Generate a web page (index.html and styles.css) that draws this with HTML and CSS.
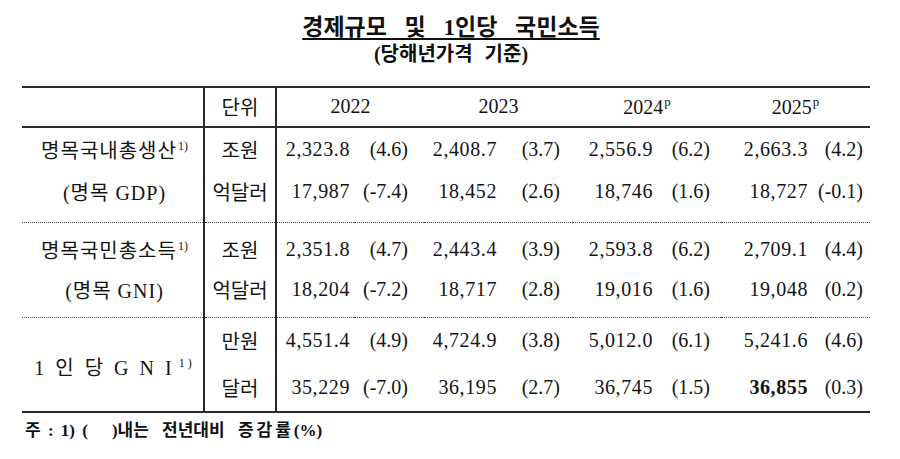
FILE: index.html
```html
<!DOCTYPE html>
<html lang="ko">
<head>
<meta charset="utf-8">
<title>경제규모 및 1인당 국민소득</title>
<link rel="stylesheet" href="styles.css">
</head>
<body>
<div class="page">
  <div class="heading">
    <div class="title">경제규모 및 1인당 국민소득</div>
    <div class="subtitle">(당해년가격 기준)</div>
  </div>
  <table class="stats">
    <colgroup>
      <col class="c-label"><col class="c-unit">
      <col class="c-a1"><col class="c-b1">
      <col class="c-a2"><col class="c-b2">
      <col class="c-a3"><col class="c-b3">
      <col class="c-a4"><col class="c-b4">
    </colgroup>
    <thead>
      <tr class="head">
        <th class="label"></th>
        <th class="unit">단위</th>
        <th class="year" colspan="2">2022</th>
        <th class="year" colspan="2">2023</th>
        <th class="year" colspan="2">2024<span class="supp">p</span></th>
        <th class="year" colspan="2">2025<span class="supp">p</span></th>
      </tr>
    </thead>
    <tbody>
      <tr class="r-top g1">
        <td class="label">명목국내총생산<span class="sup">1)</span></td>
        <td class="unit">조원</td>
        <td class="a a1">2,323.8</td><td class="b b1">(4.6)</td>
        <td class="a a2">2,408.7</td><td class="b b2">(3.7)</td>
        <td class="a a3">2,556.9</td><td class="b b3">(6.2)</td>
        <td class="a a4">2,663.3</td><td class="b b4">(4.2)</td>
      </tr>
      <tr class="r-bot g1">
        <td class="label">(명목 GDP)</td>
        <td class="unit">억달러</td>
        <td class="a a1">17,987</td><td class="b b1">(-7.4)</td>
        <td class="a a2">18,452</td><td class="b b2">(2.6)</td>
        <td class="a a3">18,746</td><td class="b b3">(1.6)</td>
        <td class="a a4">18,727</td><td class="b b4">(-0.1)</td>
      </tr>
      <tr class="r-top g2">
        <td class="label">명목국민총소득<span class="sup">1)</span></td>
        <td class="unit">조원</td>
        <td class="a a1">2,351.8</td><td class="b b1">(4.7)</td>
        <td class="a a2">2,443.4</td><td class="b b2">(3.9)</td>
        <td class="a a3">2,593.8</td><td class="b b3">(6.2)</td>
        <td class="a a4">2,709.1</td><td class="b b4">(4.4)</td>
      </tr>
      <tr class="r-bot g2">
        <td class="label">(명목 GNI)</td>
        <td class="unit">억달러</td>
        <td class="a a1">18,204</td><td class="b b1">(-7.2)</td>
        <td class="a a2">18,717</td><td class="b b2">(2.8)</td>
        <td class="a a3">19,016</td><td class="b b3">(1.6)</td>
        <td class="a a4">19,048</td><td class="b b4">(0.2)</td>
      </tr>
      <tr class="r-top g3">
        <td class="label spaced" rowspan="2">1 인 당 G N I<span class="sup sup-wide">1)</span></td>
        <td class="unit">만원</td>
        <td class="a a1">4,551.4</td><td class="b b1">(4.9)</td>
        <td class="a a2">4,724.9</td><td class="b b2">(3.8)</td>
        <td class="a a3">5,012.0</td><td class="b b3">(6.1)</td>
        <td class="a a4">5,241.6</td><td class="b b4">(4.6)</td>
      </tr>
      <tr class="r-bot g3 last">
        <td class="unit">달러</td>
        <td class="a a1">35,229</td><td class="b b1">(-7.0)</td>
        <td class="a a2">36,195</td><td class="b b2">(2.7)</td>
        <td class="a a3">36,745</td><td class="b b3">(1.5)</td>
        <td class="a a4 strong">36,855</td><td class="b b4">(0.3)</td>
      </tr>
    </tbody>
  </table>
  <div class="note"><span class="tight">주 : 1) (</span><span class="blank"></span>)내는 전년대비 <span class="wide">증감률</span>(%)</div>
</div>
</body>
</html>
```
FILE: styles.css
```css
html, body {
  margin: 0;
  padding: 0;
  background: #ffffff;
}

.page {
  width: 900px;
  height: 459px;
  font-family: "Liberation Serif", "Noto Sans CJK KR", serif;
  color: #141414;
}

.heading {
  padding-top: 14px;
  text-align: center;
  font-family: "Liberation Serif", "Noto Sans CJK KR", serif;
  font-weight: 700;
  color: #111;
}

.title {
  font-size: 23px;
  line-height: 27px;
  word-spacing: 12px;
  text-decoration: underline;
  text-decoration-thickness: 2px;
  text-underline-offset: 3px;
  padding-left: 2px;
}

.subtitle {
  font-size: 20px;
  line-height: 26px;
  word-spacing: 7px;
  padding-left: 2px;
}

.stats {
  margin: 19px 0 0 22px;
  width: 848px;
  border-collapse: collapse;
  table-layout: fixed;
  font-size: 20px;
}

.c-label { width: 182px; }
.c-unit { width: 72px; }
.c-a1 { width: 78px; }
.c-b1 { width: 70px; }
.c-a2 { width: 76px; }
.c-b2 { width: 73px; }
.c-a3 { width: 83px; }
.c-b3 { width: 65px; }
.c-a4 { width: 90px; }
.c-b4 { width: 59px; }

.stats th,
.stats td {
  padding: 0;
  white-space: nowrap;
  font-weight: 400;
  vertical-align: middle;
}

.stats .head {
  height: 40px;
  border-top: 2px solid #2a2a2a;
  border-bottom: 2px solid #2a2a2a;
}

.stats .head th {
  padding-bottom: 2px;
}

.stats .year {
  text-align: center;
}

.stats .label {
  text-align: center;
  border-right: 2px solid #2a2a2a;
  font-size: 20px;
  letter-spacing: 1px;
  padding-left: 4px;
}

.stats .unit {
  text-align: center;
  border-right: 2px solid #2a2a2a;
  font-size: 20px;
}

.stats .r-top {
  height: 47px;
}

.stats .r-bot {
  height: 48px;
  border-bottom: 1px dotted #444;
}

.stats .r-bot.last {
  border-bottom: 2px solid #2a2a2a;
}

/* vertical tuning per group */
.stats .g1.r-top td { padding-bottom: 4px; }
.stats .g1.r-bot td { padding-bottom: 12px; }
.stats .g2.r-top td { padding-top: 8px; }
.stats .g2.r-bot td { padding-bottom: 6px; }
.stats .g3.r-top td { padding-top: 1px; padding-bottom: 1px; }
.stats .g3.r-bot td { padding-bottom: 0; }

.stats .r-top td.spaced {
  letter-spacing: 3px;
  padding: 4px 0 0 4px;
}

.stats .a,
.stats .b {
  text-align: right;
}

.stats .a {
  letter-spacing: 0.6px;
}

.stats .a1 { padding-right: 4px; }
.stats .a2 { padding-right: 3px; }
.stats .a3 { padding-right: 3px; }
.stats .a4 { padding-right: 3px; }
.stats .b1 { padding-right: 16px; }
.stats .b2 { padding-right: 13px; }
.stats .b3 { padding-right: 11px; }
.stats .b4 { padding-right: 7px; }

.stats .strong {
  font-weight: 700;
}

.sup {
  font-size: 12px;
  vertical-align: 8px;
  letter-spacing: 0;
  margin-left: 1px;
}

.sup-wide {
  letter-spacing: 3px;
  margin-left: 4px;
}

.supp {
  font-size: 13px;
  vertical-align: 8px;
  margin-left: 1px;
}

.note {
  margin: 7px 0 0 25px;
  font-size: 17px;
  line-height: 22px;
  font-weight: 700;
  word-spacing: 9px;
  color: #111;
}

.note .tight {
  word-spacing: 3px;
}

.note .blank {
  display: inline-block;
  width: 24px;
}

.note .wide {
  letter-spacing: 3px;
}
```
